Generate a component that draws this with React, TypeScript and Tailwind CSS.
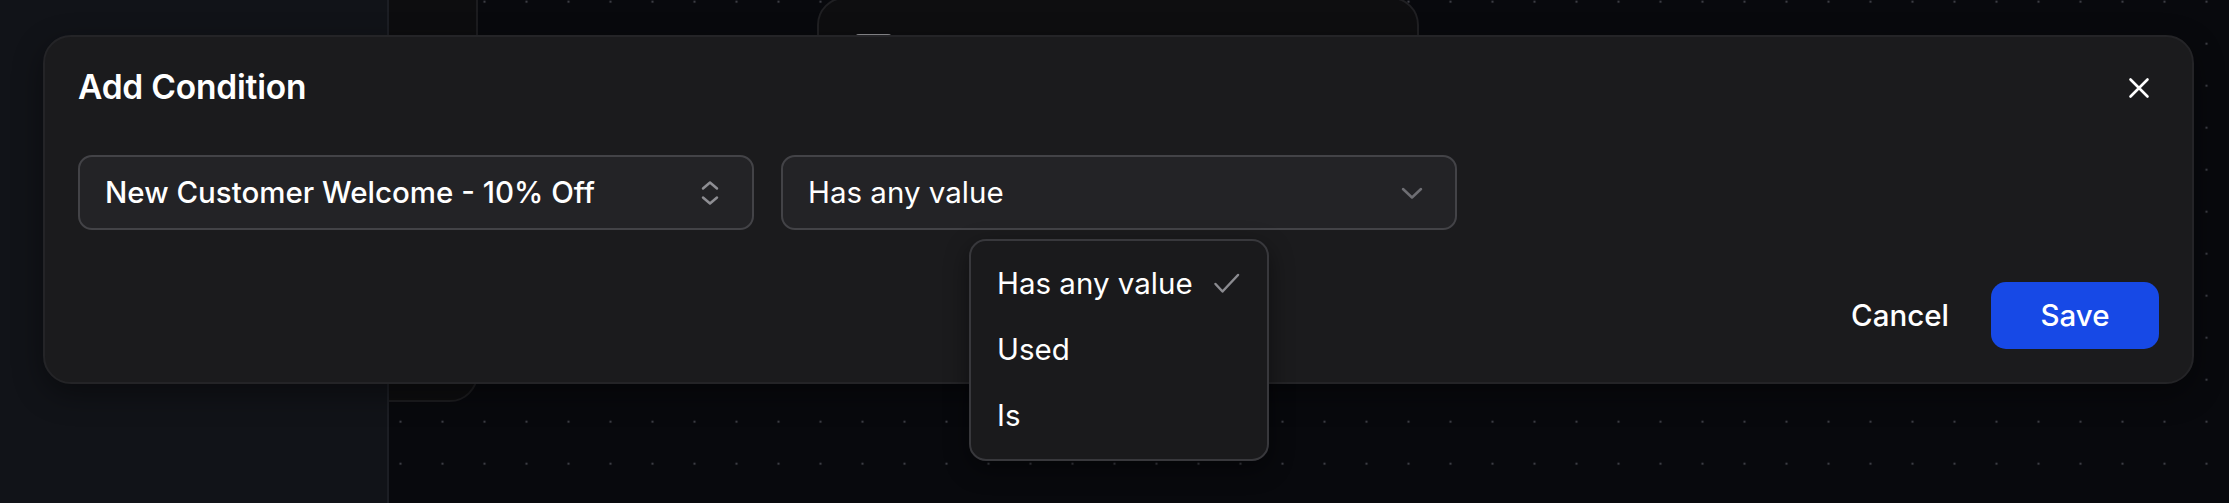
import React from "react";

const font = { fontFamily: "Inter, 'Noto Sans', sans-serif" };

function ChevronsUpDown() {
  return (
    <svg width="18" height="26" viewBox="0 0 18 26" fill="none" stroke="#8e8e93" strokeWidth="2.5" strokeLinecap="round" strokeLinejoin="round">
      <path d="M2 8.5 9 2.5l7 6" />
      <path d="M2 17.5 9 23.5l7-6" />
    </svg>
  );
}

function ChevronDown() {
  return (
    <svg width="24" height="14" viewBox="0 0 24 14" fill="none" stroke="#6e6e73" strokeWidth="2.5" strokeLinecap="round" strokeLinejoin="round">
      <path d="M3 3l9 8.5L21 3" />
    </svg>
  );
}

function CheckMark() {
  return (
    <svg width="27" height="21" viewBox="0 0 27 21" fill="none" stroke="#8b8b90" strokeWidth="2.5" strokeLinecap="round" strokeLinejoin="round">
      <path d="M2.5 11 9.5 18.5 25 2" />
    </svg>
  );
}

function CloseIcon() {
  return (
    <svg width="22" height="22" viewBox="0 0 22 22" fill="none" stroke="#ffffff" strokeWidth="2.6" strokeLinecap="round">
      <path d="M2.5 2.5l17 17M19.5 2.5l-17 17" />
    </svg>
  );
}

const options = ["Has any value", "Used", "Is"];

export default function App() {
  return (
    <div className="relative flex h-[503px] w-[2229px] overflow-hidden bg-[#08090d]" style={font}>
      {/* side panel */}
      <aside className="relative z-10 h-full w-[389px] shrink-0 border-r-2 border-[#1c1e24] bg-[#111318]" />

      {/* flow canvas with dot grid */}
      <main className="relative h-full flex-1 bg-[radial-gradient(circle_at_center,#3c3d44_1.1px,transparent_1.6px)] bg-[length:42px_42px] bg-[position:-387.5px_22.7px]">
        {/* nodes */}
        <div className="absolute left-[-120px] top-[-60px] h-[462px] w-[209px] rounded-[28px] border-2 border-[#1c1c1f] bg-[#0d0d0f]" />
        <div className="absolute left-[428px] top-[-3px] h-[200px] w-[602px] rounded-[28px] border-2 border-[#202023] bg-[#0e0e10]">
          <div className="ml-[35px] mt-[35px] h-[20px] w-[39px] rounded-[5px] bg-[#8d8d90]" />
        </div>
      </main>

      {/* dialog */}
      <div className="absolute left-[43px] top-[35px] z-20 flex h-[349px] w-[2151px] flex-col rounded-[28px] border-2 border-[#242427] bg-[#1b1b1d] px-[33px] pb-[33px] pt-[33px] shadow-[0_10px_30px_rgba(0,0,0,0.4)]">
        <div className="flex h-[36px] items-center justify-between">
          <h2 className="text-[33.5px] font-semibold leading-none tracking-[-0.2px] text-white">Add Condition</h2>
          <button className="mr-[9px] flex h-[22px] w-[22px] items-center justify-center">
            <CloseIcon />
          </button>
        </div>

        <div className="mt-[49px] flex gap-[27px]">
          <div className="flex h-[75px] w-[676px] items-center justify-between rounded-[14px] border-2 border-[#434347] bg-[#232326] pl-[25px] pr-[33px]">
            <span className="text-[29.5px] font-medium text-white">New Customer Welcome - 10% Off</span>
            <ChevronsUpDown />
          </div>
          <div className="flex h-[75px] w-[676px] items-center justify-between rounded-[14px] border-2 border-[#434347] bg-[#232326] pl-[25px] pr-[31px]">
            <span className="text-[29.5px] font-normal text-white">Has any value</span>
            <ChevronDown />
          </div>
        </div>

        <div className="mt-auto flex items-center justify-end gap-[14px]">
          <button className="flex h-[67px] items-center px-[28px] text-[29.5px] font-medium text-white">Cancel</button>
          <button className="flex h-[67px] w-[168px] items-center justify-center rounded-[15px] bg-[#1749e6] text-[29.5px] font-medium text-white">
            Save
          </button>
        </div>
      </div>

      {/* open select menu */}
      <div className="absolute left-[969px] top-[239px] z-30 w-[300px] rounded-[17px] border-2 border-[#38383c] bg-[#1a1a1c] pb-[11px] pt-[9px] shadow-[0_8px_24px_rgba(0,0,0,0.45)]">
        {options.map((o, i) => (
          <div key={o} className="flex h-[66px] items-center justify-between pl-[26px] pr-[27px]">
            <span className="text-[29.5px] text-white">{o}</span>
            {i === 0 && <CheckMark />}
          </div>
        ))}
      </div>
    </div>
  );
}
